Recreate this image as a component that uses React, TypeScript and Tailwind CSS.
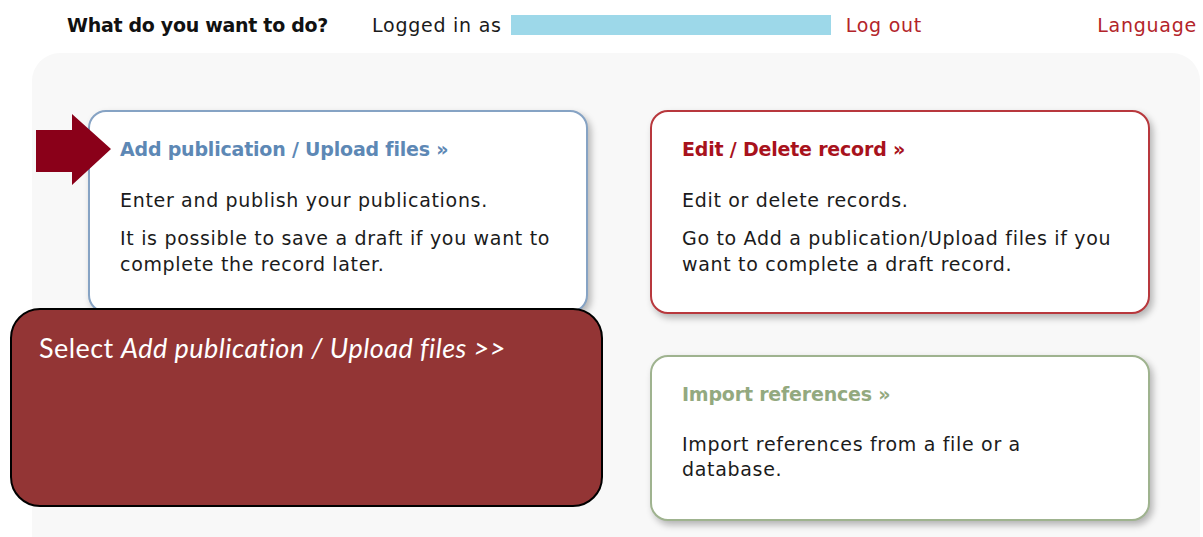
import React from "react";

const verdana = { fontFamily: '"DejaVu Sans", Verdana, sans-serif' };

function Card({
  title,
  titleClass,
  borderClass,
  children,
  className = "",
}: {
  title: string;
  titleClass: string;
  borderClass: string;
  children: React.ReactNode;
  className?: string;
}) {
  return (
    <div
      className={`w-[500px] rounded-[18px] border-2 bg-white pl-[30px] pr-[10px] pt-[24px] shadow-[3px_4px_7px_rgba(0,0,0,0.28)] ${borderClass} ${className}`}
    >
      <div className={`text-[19px] font-bold leading-[26px] tracking-[-0.2px] ${titleClass}`}>{title}</div>
      <div className="mt-[25px] text-[19px] leading-[26px] tracking-[0.68px] text-[#1b1b1b]">{children}</div>
    </div>
  );
}

export default function App() {
  return (
    <div className="relative h-[537px] w-[1203px] overflow-hidden bg-white" style={verdana}>
      {/* top bar */}
      <div className="flex h-[50px] items-center pl-[67px] pr-[6px] text-[19px] tracking-[0.75px]">
        <div className="w-[305px] font-bold tracking-[-0.3px] text-[#111]">What do you want to do?</div>
        <div className="text-[#1b1b1b]">Logged in as</div>
        <div className="ml-[9px] h-[20px] w-[320px] bg-[#9dd8e9]" />
        <a className="ml-[15px] text-[#b3242a]">Log out</a>
        <a className="ml-auto text-[#b3242a]">Language</a>
      </div>

      {/* main panel */}
      <div className="ml-[32px] mr-[3px] mt-[3px] h-[484px] rounded-t-[28px] bg-[#f8f8f8] pl-[56px] pt-[57px]">
        <div className="flex gap-[62px]">
          <Card
            title="Add publication / Upload files »"
            titleClass="text-[#5d88b5]"
            borderClass="border-[#86a3c4]"
            className="h-[203px]"
          >
            <p>Enter and publish your publications.</p>
            <p className="mt-[12px]">
              It is possible to save a draft if you want to
              <br />
              complete the record later.
            </p>
          </Card>
          <div className="flex flex-col gap-[41px]">
            <Card
              title="Edit / Delete record »"
              titleClass="text-[#a8121c]"
              borderClass="border-[#b8383d]"
              className="h-[204px]"
            >
              <p>Edit or delete records.</p>
              <p className="mt-[12px]">
                Go to Add a publication/Upload files if you
                <br />
                want to complete a draft record.
              </p>
            </Card>
            <Card
              title="Import references »"
              titleClass="text-[#93a97f]"
              borderClass="border-[#9fb38f]"
              className="h-[166px]"
            >
              <p className="leading-[25px]">
                Import references from a file or a
                <br />
                database.
              </p>
            </Card>
          </div>
        </div>
      </div>

      {/* pointer arrow */}
      <svg className="absolute left-[34px] top-[112px]" width="80" height="76" viewBox="0 0 80 76">
        <polygon points="2,18 38,18 38,2 77,37 38,73 38,60 2,60" fill="#8a0019" />
      </svg>

      {/* callout */}
      <div
        className="absolute left-[10px] top-[308px] h-[199px] w-[593px] rounded-[30px] border-2 border-black bg-[#933535] pl-[27px] pt-[19px] text-[27px] leading-[38px] tracking-[0.45px] text-white"
        style={{ fontFamily: 'Lato, "Open Sans", sans-serif' }}
      >
        Select <span className="italic">Add publication / Upload files &gt;&gt;</span>
      </div>
    </div>
  );
}
